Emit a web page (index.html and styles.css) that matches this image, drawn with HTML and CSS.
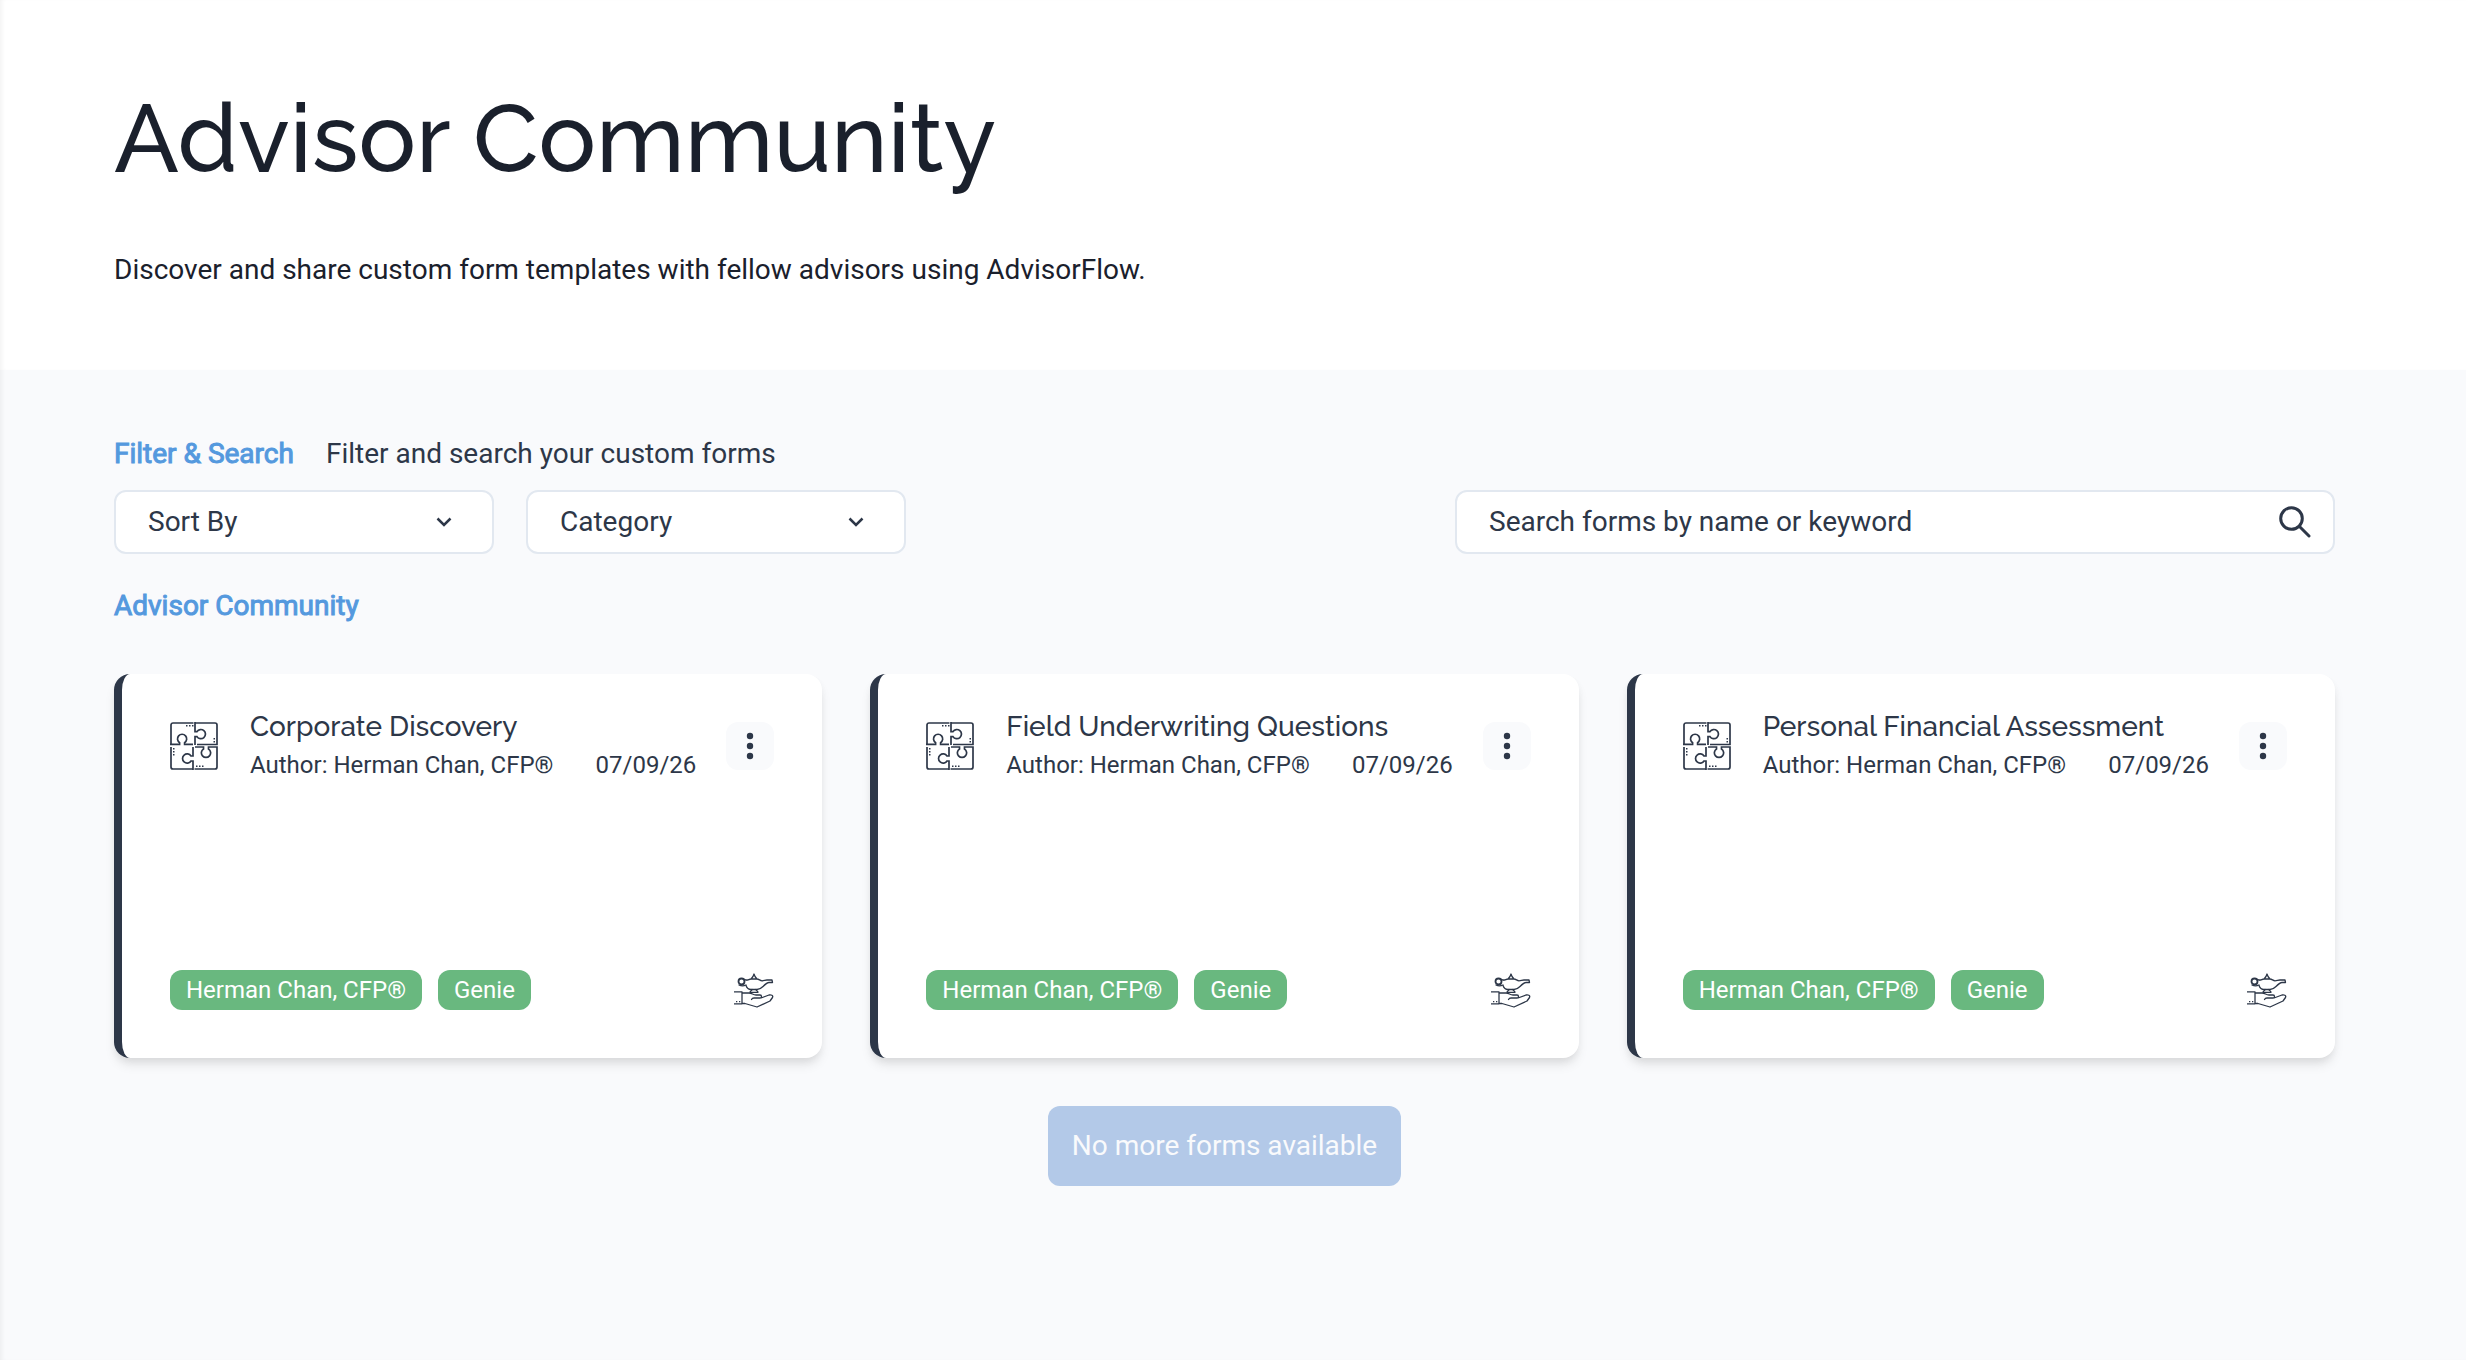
FILE: index.html
```html
<!DOCTYPE html>
<html lang="en">
<head>
  <meta charset="UTF-8" />
  <meta name="viewport" content="width=device-width, initial-scale=1.0"/>
  <title>Advisor Community</title>
  <link rel="stylesheet" href="styles.css">
</head>
<body>
  <!-- shared icons -->
  <svg class="sprite" aria-hidden="true">
    <symbol id="icon-puzzle" viewBox="0 0 48 48">
      <g fill="none" stroke="currentColor" stroke-width="1.7">
        <path d="M1 22.5V3a2 2 0 0 1 2-2h20.5M0 22.3h9.6v-1.6a4.6 4.6 0 1 1 5 0v1.6H23"/>
        <path d="M25 0v9.6h2a4.6 4.6 0 1 1 0 5h-2V23M25 1h20a2 2 0 0 1 2 2v19.5H27"/>
        <path d="M25 25h8.500v2a4.600 4.600 0 1 0 5 0v-2H47v20a2 2 0 0 1-2 2H24.500"/>
        <path d="M23 25v9h-2a4.600 4.600 0 1 0 0 5h2v9M1 25v20a2 2 0 0 0 2 2h20"/>
      </g>
      <path d="M16 3h1.500v1.500H16zM19 3h1.500v1.500H19zM22 3h1.500v1.500H22zM43.500 16H45v1.500h-1.500zM43.500 19H45v1.500h-1.500zM3 26h1.500v1.500H3zM3 29h1.500v1.500H3zM3 32h1.500v1.500H3zM26 43.500h1.500V45H26zM29 43.500h1.500V45H29zM32 43.500h1.500V45H32z" fill="currentColor"/>
    </symbol>
    <symbol id="icon-genie" viewBox="0 0 40 35">
      <g fill="none" stroke="currentColor" stroke-width="1.300" stroke-linejoin="round" stroke-linecap="round">
        <path d="M17 6l2-2.500L20 1l1 2.500L23 6M12 7c2 .5 3-1 5-1h6c2 0 3 1.800 5 1.800s3-.8 5-.8h5l.500 2.500H35c-2 0-4 2-6 4s-4 3-6 3h-6c-2 0-4-1-5-4"/>
        <path d="M18 16.500c0 1.500-2 1-2 2.800h8c0-1.800-2-1.300-2-2.800"/>
        <circle cx="7.500" cy="8.500" r="3" stroke-width="1.800"/>
        <path d="M12 12c-2 1-5 1-7 0M9.500 6l2.500 1"/>
        <path d="M0 18.800h8v12H0M8 20h7c3 0 4 2 7 2h4c2 0 2 3 0 3h-6c-1 0-2 .5-2.500 1.500M27 25l8-3c2-.5 4.500.5 3.500 2.500L36 28l-13 6-12-3.500H8"/>
      </g>
      <path d="M2 28h1.300v1.300H2zM5 28h1.300v1.300H5z" fill="currentColor"/>
    </symbol>
    <symbol id="icon-dots" viewBox="0 0 8 28">
      <g fill="currentColor"><circle cx="4" cy="4" r="3.200"/><circle cx="4" cy="14" r="3.200"/><circle cx="4" cy="24" r="3.200"/></g>
    </symbol>
  </svg>

  <header class="page-header">
    <h1>Advisor Community</h1>
    <p>Discover and share custom form templates with fellow advisors using AdvisorFlow.</p>
  </header>

  <main class="content">
    <div class="filter-title">
      <h2>Filter &amp; Search</h2>
      <span>Filter and search your custom forms</span>
    </div>
    <div class="filter-bar">
      <div class="select-group">
        <div class="select-box">
          <select aria-label="Sort By"><option>Sort By</option></select>
          <svg class="chevron" viewBox="0 0 16 10"><path d="M1.500 1.500L8 8l6.500-6.500"/></svg>
        </div>
        <div class="select-box">
          <select aria-label="Category"><option>Category</option></select>
          <svg class="chevron" viewBox="0 0 16 10"><path d="M1.500 1.500L8 8l6.500-6.500"/></svg>
        </div>
      </div>
      <form class="search-box">
        <input type="text" aria-label="Search forms" placeholder="Search forms by name or keyword" />
        <button type="button" class="search-btn" aria-label="Search">
          <svg viewBox="0 0 32 32"><circle cx="12.500" cy="12.500" r="10.800"/><path d="M20.500 20.500l9.500 9.500"/></svg>
        </button>
      </form>
    </div>

    <h2>Advisor Community</h2>

    <div class="card-grid">
      <div class="card">
        <div class="card-header">
          <svg class="puzzle"><use href="#icon-puzzle"/></svg>
          <div class="card-info">
            <h3>Corporate Discovery</h3>
            <div class="card-meta"><span>Author: Herman Chan, CFP®</span><span>07/09/26</span></div>
          </div>
          <button class="menu-btn" aria-label="Options"><svg><use href="#icon-dots"/></svg></button>
        </div>
        <div class="card-footer">
          <span class="tag">Herman Chan, CFP®</span>
          <span class="tag">Genie</span>
          <svg class="genie"><use href="#icon-genie"/></svg>
        </div>
      </div>

      <div class="card">
        <div class="card-header">
          <svg class="puzzle"><use href="#icon-puzzle"/></svg>
          <div class="card-info">
            <h3>Field Underwriting Questions</h3>
            <div class="card-meta"><span>Author: Herman Chan, CFP®</span><span>07/09/26</span></div>
          </div>
          <button class="menu-btn" aria-label="Options"><svg><use href="#icon-dots"/></svg></button>
        </div>
        <div class="card-footer">
          <span class="tag">Herman Chan, CFP®</span>
          <span class="tag">Genie</span>
          <svg class="genie"><use href="#icon-genie"/></svg>
        </div>
      </div>

      <div class="card">
        <div class="card-header">
          <svg class="puzzle"><use href="#icon-puzzle"/></svg>
          <div class="card-info">
            <h3>Personal Financial Assessment</h3>
            <div class="card-meta"><span>Author: Herman Chan, CFP®</span><span>07/09/26</span></div>
          </div>
          <button class="menu-btn" aria-label="Options"><svg><use href="#icon-dots"/></svg></button>
        </div>
        <div class="card-footer">
          <span class="tag">Herman Chan, CFP®</span>
          <span class="tag">Genie</span>
          <svg class="genie"><use href="#icon-genie"/></svg>
        </div>
      </div>
    </div>

    <button class="more-btn" disabled>No more forms available</button>
  </main>
</body>
</html>
```

FILE: styles.css
```css
* {
  box-sizing: border-box;
}
body {
  margin: 0;
  min-height: 100vh;
  font-family: Roboto, sans-serif;
  font-size: 28px;
  line-height: 40px;
  color: #2d3748;
  background: #f9fafc;
  box-shadow: inset 4px 0 4px -2px rgba(0, 0, 0, 0.05);
}
h1, h2, h3, p {
  margin: 0;
}
button, input, select {
  font: inherit;
  color: inherit;
}
.sprite {
  position: absolute;
  width: 0;
  height: 0;
}
.page-header {
  padding: 80px 131px 80px 114px;
  background: #fff;
  color: #1a202c;
  box-shadow: inset 4px 0 4px -2px rgba(0, 0, 0, 0.05);
}
.page-header h1 {
  font-family: Raleway, Lato, sans-serif;
  font-size: 96px;
  font-weight: 500;
  line-height: 116px;
  margin-bottom: 54px;
}
.content {
  padding: 64px 131px 48px 114px;
}
.content h2 {
  font-size: 28px;
  font-weight: 400;
  color: #5499de;
  -webkit-text-stroke: 1px #5499de;
}
.filter-title {
  display: flex;
  gap: 32px;
  margin-bottom: 16px;
}
.filter-bar {
  display: flex;
  justify-content: space-between;
  margin-bottom: 32px;
}
.select-group {
  display: flex;
  gap: 32px;
}
.select-box {
  position: relative;
  width: 380px;
}
.select-box select {
  appearance: none;
  width: 100%;
  height: 64px;
  padding: 0 32px;
  background: #fff;
  border: 2px solid #e2e8f0;
  border-radius: 12px;
}
.chevron {
  position: absolute;
  right: 42px;
  top: 27px;
  width: 16px;
  height: 10px;
  fill: none;
  stroke: #2d3748;
  stroke-width: 2.5;
  pointer-events: none;
}
.search-box {
  display: flex;
  align-items: center;
  width: 880px;
  height: 64px;
  padding: 0 22px 0 32px;
  background: #fff;
  border: 2px solid #e2e8f0;
  border-radius: 12px;
}
.search-box input {
  flex: 1;
  padding: 0;
  border: none;
  outline: none;
  background: none;
}
.search-box input::placeholder {
  color: #2d3748;
  opacity: 1;
}
.search-btn {
  display: flex;
  padding: 0;
  border: none;
  background: none;
}
.search-btn svg {
  width: 32px;
  height: 32px;
  fill: none;
  stroke: #2d3748;
  stroke-width: 3;
  stroke-linecap: round;
}
.card-grid {
  display: grid;
  grid-template-columns: repeat(3, 1fr);
  gap: 48px;
  margin: 48px 0;
}
.card {
  display: flex;
  flex-direction: column;
  justify-content: space-between;
  min-height: 384px;
  padding: 34px 48px 48px;
  background: #fff;
  border-left: 8px solid #2d3748;
  border-radius: 16px;
  box-shadow: 0 8px 12px -2px rgba(0, 0, 0, 0.1), 0 4px 8px -2px rgba(0, 0, 0, 0.06);
}
.card-header {
  display: flex;
  align-items: center;
  gap: 30px;
}
.puzzle {
  width: 48px;
  height: 48px;
}
.card-info {
  flex: 1;
  padding-left: 2px;
}
.card-info h3 {
  font-family: Raleway, Lato, sans-serif;
  font-size: 28px;
  font-weight: 500;
  line-height: 38px;
}
.card-meta {
  display: flex;
  justify-content: space-between;
  font-size: 24px;
  line-height: 38px;
}
.menu-btn {
  display: flex;
  align-items: center;
  justify-content: center;
  width: 48px;
  height: 48px;
  padding: 0;
  border: none;
  border-radius: 12px;
  background: #f9fafc;
}
.menu-btn svg {
  width: 8px;
  height: 28px;
}
.card-footer {
  display: flex;
  align-items: center;
  gap: 16px;
}
.tag {
  padding: 0 16px;
  font-size: 24px;
  color: #fff;
  background: #69b87f;
  border-radius: 12px;
}
.genie {
  width: 40px;
  height: 35px;
  margin-left: auto;
}
.more-btn {
  display: block;
  margin: 0 auto;
  height: 80px;
  padding: 0 24px;
  border: none;
  border-radius: 12px;
  background: #b3c9e8;
  color: #f9fafc;
}
```
